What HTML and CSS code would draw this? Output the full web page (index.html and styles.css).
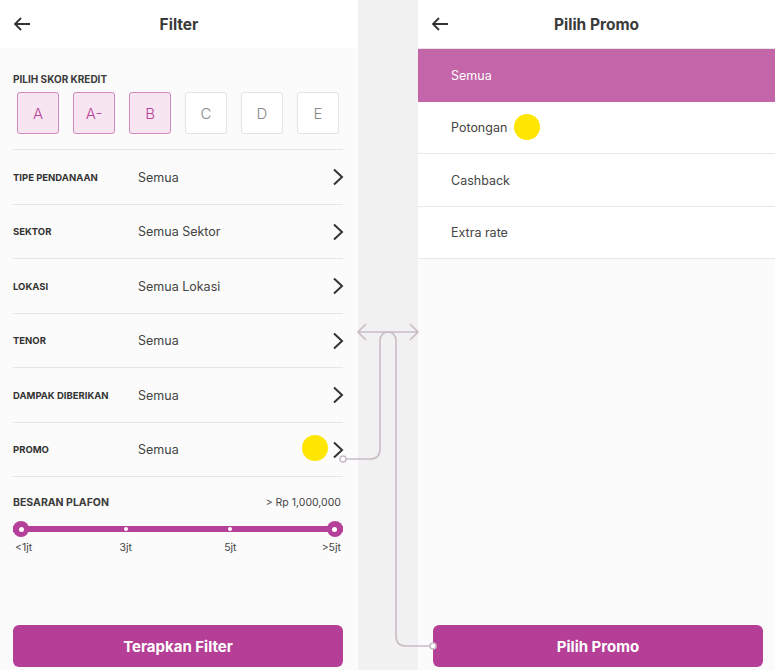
FILE: index.html
```html
<!DOCTYPE html>
<html lang="id">
<head>
<meta charset="utf-8">
<title>Filter</title>
<link rel="stylesheet" href="styles.css">
</head>
<body>
<div class="stage">
  <section class="panel">
    <header class="bar">
      <svg class="back" width="18" height="14" viewBox="0 0 18 14"><path d="M17 7H2M8 1L2 7l6 6" fill="none" stroke="#333" stroke-width="1.8"/></svg>
      <h1 class="bar-title">Filter</h1>
    </header>
    <div class="content">
      <div class="score">
        <div class="label">PILIH SKOR KREDIT</div>
        <div class="grades">
          <span class="grade on">A</span>
          <span class="grade on">A-</span>
          <span class="grade on">B</span>
          <span class="grade">C</span>
          <span class="grade">D</span>
          <span class="grade">E</span>
        </div>
      </div>
      <div class="row"><span class="row-label">TIPE PENDANAAN</span><span class="row-value">Semua</span><svg class="chev" width="12" height="18" viewBox="0 0 12 18"><path d="M2 1.5l8 7.5-8 7.5" fill="none" stroke="#333" stroke-width="2"/></svg></div>
      <div class="row"><span class="row-label">SEKTOR</span><span class="row-value">Semua Sektor</span><svg class="chev" width="12" height="18" viewBox="0 0 12 18"><path d="M2 1.5l8 7.5-8 7.5" fill="none" stroke="#333" stroke-width="2"/></svg></div>
      <div class="row"><span class="row-label">LOKASI</span><span class="row-value">Semua Lokasi</span><svg class="chev" width="12" height="18" viewBox="0 0 12 18"><path d="M2 1.5l8 7.5-8 7.5" fill="none" stroke="#333" stroke-width="2"/></svg></div>
      <div class="row"><span class="row-label">TENOR</span><span class="row-value">Semua</span><svg class="chev" width="12" height="18" viewBox="0 0 12 18"><path d="M2 1.5l8 7.5-8 7.5" fill="none" stroke="#333" stroke-width="2"/></svg></div>
      <div class="row"><span class="row-label">DAMPAK DIBERIKAN</span><span class="row-value">Semua</span><svg class="chev" width="12" height="18" viewBox="0 0 12 18"><path d="M2 1.5l8 7.5-8 7.5" fill="none" stroke="#333" stroke-width="2"/></svg></div>
      <div class="row"><span class="row-label">PROMO</span><span class="row-value">Semua</span><svg class="chev" width="12" height="18" viewBox="0 0 12 18"><path d="M2 1.5l8 7.5-8 7.5" fill="none" stroke="#333" stroke-width="2"/></svg></div>
      <div class="plafon">
        <div class="plafon-head"><span class="plafon-title">BESARAN PLAFON</span><span class="plafon-val">&gt; Rp 1,000,000</span></div>
        <div class="slider">
          <span class="stop"><i class="knob"></i></span>
          <span class="stop"><i class="tick"></i></span>
          <span class="stop"><i class="tick"></i></span>
          <span class="stop"><i class="knob"></i></span>
        </div>
        <div class="ticks">
          <span class="stop first">&lt;1jt</span>
          <span class="stop">3jt</span>
          <span class="stop">5jt</span>
          <span class="stop last">&gt;5jt</span>
        </div>
      </div>
    </div>
    <button class="cta">Terapkan Filter</button>
  </section>

  <div class="gap"></div>

  <section class="panel">
    <header class="bar">
      <svg class="back" width="18" height="14" viewBox="0 0 18 14"><path d="M17 7H2M8 1L2 7l6 6" fill="none" stroke="#333" stroke-width="1.8"/></svg>
      <h1 class="bar-title">Pilih Promo</h1>
    </header>
    <ul class="list">
      <li class="item active">Semua</li>
      <li class="item">Potongan</li>
      <li class="item">Cashback</li>
      <li class="item">Extra rate</li>
    </ul>
    <button class="cta">Pilih Promo</button>
  </section>

  <svg class="links" width="775" height="670" viewBox="0 0 775 670">
    <g fill="none" stroke="#c9bcc7" stroke-width="1.6">
      <path d="M358 332H418M366 324l-8 8 8 8M410 324l8 8-8 8"/>
      <path d="M346 459H370Q380 459 380 449V340A8 8 0 0 1 396 340V636Q396 646 406 646H430"/>
      <circle cx="343" cy="459" r="3" fill="#fff"/>
      <circle cx="433" cy="646" r="3" fill="#fff"/>
    </g>
  </svg>
  <span class="touch touch-left"></span>
  <span class="touch touch-right"></span>
</div>
</body>
</html>
```
FILE: styles.css
```css
* { box-sizing: border-box; }
html, body { margin: 0; padding: 0; }
body {
  font-family: Inter, "Noto Sans", sans-serif;
  color: #333;
  background: #f1f1f1;
}
.stage {
  position: relative;
  width: 775px;
  height: 670px;
  display: flex;
  overflow: hidden;
}
.panel {
  width: 358px;
  height: 670px;
  background: #fbfbfb;
  display: flex;
  flex-direction: column;
}
.panel:last-of-type { width: 357px; }
.gap { width: 60px; background: #f1f1f1; }
.bar {
  height: 48px;
  flex: none;
  background: #fff;
  display: flex;
  align-items: center;
  justify-content: center;
  position: relative;
}
.back { position: absolute; left: 13px; top: 17px; }
.bar-title {
  margin: 0;
  font-size: 15.5px;
  font-weight: 700;
  color: #3a3a3a;
  padding-top: 1px;
}
.content { padding: 0 15px 0 13px; }
.score { padding-top: 25px; border-bottom: 1px solid #e6e6e6; padding-bottom: 15px; }
.label { font-size: 10px; font-weight: 700; color: #3a3a3a; line-height: 12px; }
.grades { display: flex; gap: 14px; padding-left: 4px; margin-top: 7px; }
.grade {
  width: 42px; height: 42px;
  display: flex; align-items: center; justify-content: center;
  border: 1px solid #e3e3e3;
  border-radius: 3px;
  background: #fff;
  font-size: 15px;
  font-weight: 300;
  color: #8a8a8a;
}
.grade.on { background: #f7e5f1; border-color: #cf8bbd; color: #b5449a; }
.row {
  height: 54.5px;
  display: flex;
  align-items: center;
  border-bottom: 1px solid #e6e6e6;
  padding-top: 1px;
}
.row-label { width: 125px; font-size: 9.5px; font-weight: 700; color: #333; }
.row-value { flex: 1; font-size: 12.5px; color: #444; }
.chev { flex: none; margin-right: -1px; }
.plafon { padding-top: 19px; }
.plafon-head { display: flex; justify-content: space-between; align-items: center; height: 12px; }
.plafon-title { font-size: 10.5px; font-weight: 700; color: #3a3a3a; }
.plafon-val { font-size: 10.5px; color: #444; margin-right: 2px; }
.slider {
  display: flex; justify-content: space-between; align-items: center;
  margin-top: 13px; height: 16px;
  background: linear-gradient(#b5409a, #b5409a) center / 100% 6px no-repeat;
}
.stop { width: 16px; display: flex; justify-content: center; align-items: center; flex: none; }
.knob {
  width: 16px; height: 16px; border-radius: 50%;
  background: #b5409a;
  display: flex; align-items: center; justify-content: center;
}
.knob::after { content: ""; width: 5px; height: 5px; border-radius: 50%; background: #fff; }
.tick { width: 4px; height: 4px; border-radius: 50%; background: #fff; }
.ticks {
  display: flex; justify-content: space-between;
  font-size: 10.5px; color: #444; margin-top: 5px; line-height: 12px;
}
.ticks .stop { white-space: nowrap; }
.ticks .first { justify-content: flex-start; padding-left: 2px; }
.ticks .last { justify-content: flex-end; padding-right: 2px; }
.cta {
  margin: auto 15px 3px 13px;
  height: 42px;
  flex: none;
  border: 0;
  border-radius: 6px;
  background: #b53f96;
  color: #fff;
  font-family: inherit;
  font-size: 15px;
  font-weight: 700;
}
.panel:last-of-type .cta { margin: auto 12px 3px 15px; }
.list { list-style: none; margin: 0; padding: 0; border-top: 1px solid #e8e8e8; }
.item {
  height: 52.5px;
  display: flex; align-items: center;
  padding-left: 33px;
  padding-top: 1px;
  font-size: 12.5px; color: #444;
  background: #fff;
  border-bottom: 1px solid #e8e8e8;
}
.item.active { background: #c464a9; color: #fff; border-bottom-color: #c464a9; }
.links { position: absolute; left: 0; top: 0; pointer-events: none; }
.touch {
  position: absolute; width: 26px; height: 26px; border-radius: 50%;
  background: #ffe600;
}
.touch-left { left: 302px; top: 435px; }
.touch-right { left: 514px; top: 114px; }
```
